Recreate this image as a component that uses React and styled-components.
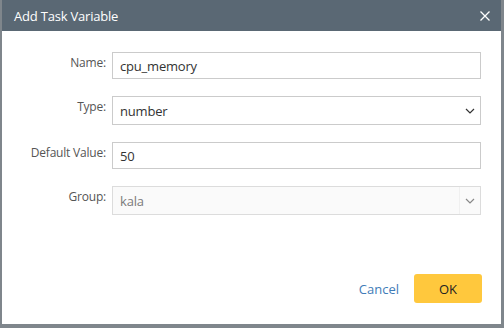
import styled, { createGlobalStyle, css } from 'styled-components';

const GlobalStyle = createGlobalStyle`
  html, body {
    margin: 0;
    padding: 0;
    background: #7f868c;
    font-family: "Open Sans", "Noto Sans", sans-serif;
  }
  * { box-sizing: border-box; }
`;

const Backdrop = styled.div`
  width: 504px;
  height: 328px;
  padding: 0 3px 4px 2px;
  background: #7f868c;
`;

const Dialog = styled.div`
  width: 499px;
  height: 324px;
  background: #fff;
  display: flex;
  flex-direction: column;
`;

const Header = styled.header`
  height: 31px;
  flex: none;
  background: #5a6874;
  display: flex;
  align-items: center;
  justify-content: space-between;
  padding: 0 10px 0 12px;
`;

const Title = styled.h2`
  margin: 0;
  font-size: 13px;
  font-weight: 400;
  color: #fff;
  letter-spacing: -0.2px;
`;

const CloseButton = styled.button`
  border: 0;
  background: none;
  padding: 0;
  width: 12px;
  height: 12px;
  display: flex;
  cursor: pointer;
`;

const Form = styled.form`
  flex: 1;
  display: grid;
  grid-template-columns: 104px 1fr;
  column-gap: 6px;
  row-gap: 17px;
  align-content: start;
  padding: 21px 20px 0 0;
`;

const Label = styled.label`
  font-size: 12px;
  line-height: 16px;
  color: #555;
  text-align: right;
  padding-top: 3px;
  letter-spacing: -0.2px;
`;

const fieldBase = css`
  width: 100%;
  font-family: inherit;
  font-size: 13px;
  letter-spacing: -0.2px;
  border: 1px solid #cbcbcb;
  border-radius: 0;
  outline: none;
  padding: 0 7px;
  margin: 0;
`;

const TextInput = styled.input`
  ${fieldBase}
  height: 27px;
  color: #333;
  background: #fff;
`;

const SelectWrap = styled.div`
  position: relative;
  height: 29px;
`;

const Select = styled.select`
  ${fieldBase}
  height: 29px;
  appearance: none;
  opacity: 1;
  color: ${({ disabled }) => (disabled ? '#7a7a7a' : '#333')};
  background: ${({ disabled }) => (disabled ? '#fafafa' : '#fff')};
  border-color: ${({ disabled }) => (disabled ? '#dcdcdc' : '#cbcbcb')};
  padding-right: 30px;

  &:disabled {
    color: #7a7a7a;
    opacity: 1;
  }
`;

const Chevron = styled.span`
  position: absolute;
  top: 1px;
  right: 1px;
  bottom: 1px;
  width: 21px;
  display: flex;
  align-items: center;
  justify-content: center;
  pointer-events: none;
  border-left: 1px solid ${({ $divider }) => ($divider ? '#f0f0f0' : 'transparent')};
`;

const Footer = styled.footer`
  flex: none;
  display: flex;
  justify-content: flex-end;
  align-items: center;
  gap: 15px;
  padding: 0 19px 21px 0;
`;

const LinkButton = styled.button`
  border: 0;
  background: none;
  font-family: inherit;
  font-size: 13px;
  color: #3f7cb8;
  padding: 0;
  cursor: pointer;
`;

const PrimaryButton = styled.button`
  width: 68px;
  height: 29px;
  border: 0;
  border-radius: 3px;
  background: #ffc83d;
  color: #222;
  font-family: inherit;
  font-size: 13px;
  cursor: pointer;
`;

function ChevronIcon({ color }) {
  return (
    <svg width="10" height="6" viewBox="0 0 10 6">
      <path d="M1 1 L5 5 L9 1" fill="none" stroke={color} strokeWidth="1.2" />
    </svg>
  );
}

export default function App() {
  return (
    <>
      <GlobalStyle />
      <Backdrop>
        <Dialog role="dialog">
          <Header>
            <Title>Add Task Variable</Title>
            <CloseButton aria-label="Close">
              <svg width="12" height="12" viewBox="0 0 12 12">
                <path d="M1.5 1.5 L10.5 10.5 M10.5 1.5 L1.5 10.5" stroke="#fff" strokeWidth="1.3" />
              </svg>
            </CloseButton>
          </Header>
          <Form onSubmit={(e) => e.preventDefault()}>
            <Label htmlFor="name">Name:</Label>
            <TextInput id="name" defaultValue="cpu_memory" />

            <Label htmlFor="type">Type:</Label>
            <SelectWrap>
              <Select id="type" defaultValue="number">
                <option value="number">number</option>
                <option value="string">string</option>
              </Select>
              <Chevron><ChevronIcon color="#333" /></Chevron>
            </SelectWrap>

            <Label htmlFor="default">Default Value:</Label>
            <TextInput id="default" defaultValue="50" />

            <Label htmlFor="group">Group:</Label>
            <SelectWrap>
              <Select id="group" disabled defaultValue="kala">
                <option value="kala">kala</option>
              </Select>
              <Chevron $divider><ChevronIcon color="#888" /></Chevron>
            </SelectWrap>
          </Form>
          <Footer>
            <LinkButton type="button">Cancel</LinkButton>
            <PrimaryButton type="button">OK</PrimaryButton>
          </Footer>
        </Dialog>
      </Backdrop>
    </>
  );
}
